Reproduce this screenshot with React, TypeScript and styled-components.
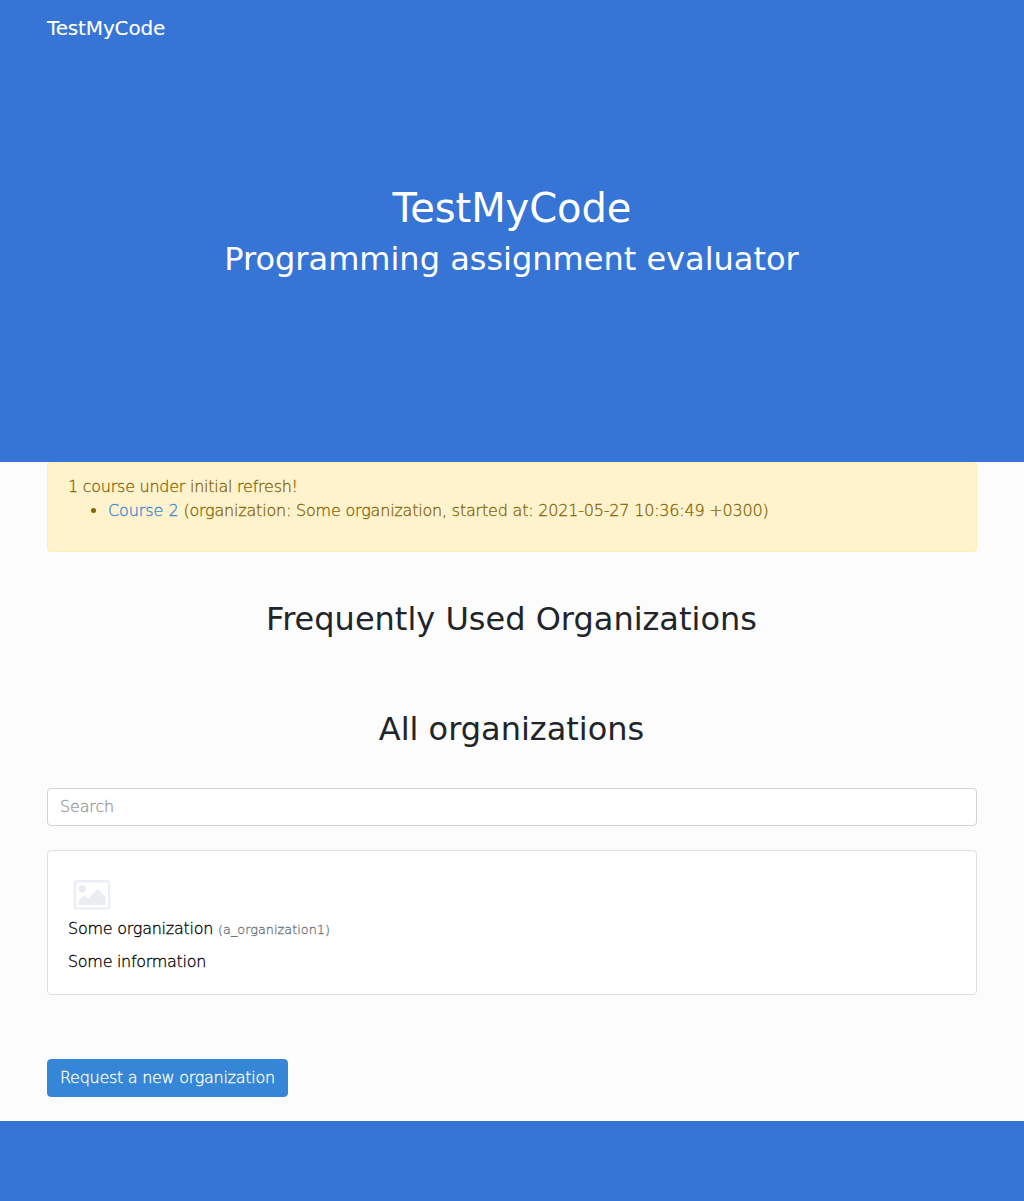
import React from "react";
import styled, { createGlobalStyle } from "styled-components";

const GlobalStyle = createGlobalStyle`
  *, *::before, *::after { box-sizing: border-box; }
  body {
    margin: 0;
    background: #3675d6;
    color: #212529;
    font: 200 16px/1.5 "DejaVu Sans", sans-serif;
    letter-spacing: -0.25px;
    -webkit-text-stroke: 0.3px;
  }
`;
const Container = styled.div`
  width: 930px;
  margin: 0 auto;
`;
const Nav = styled.nav`
  height: 56px;
  padding: 8px 0;
`;
const Brand = styled.a`
  display: inline-block;
  padding: 5px 0;
  color: #fff;
  font-size: 20px;
  line-height: 30px;
  font-weight: 400;
  letter-spacing: -0.15px;
  -webkit-text-stroke: 0.1px;
  text-decoration: none;
`;
const Hero = styled.header`
  height: 406px;
  padding-top: 128px;
  text-align: center;
  color: #fff;
`;
const HeroTitle = styled.h1`
  margin: 0 0 8px;
  font-size: 40px;
  line-height: 48px;
  font-weight: 400;
  letter-spacing: -0.05px;
  -webkit-text-stroke: 0;
`;
const Heading = styled.h2`
  margin: 0;
  padding-right: 1px;
  font-size: 32px;
  line-height: 38px;
  font-weight: 400;
  letter-spacing: 0;
  -webkit-text-stroke: 0;
  text-align: center;
`;
const Main = styled.main`
  height: 659px;
  background: #fcfcfc;
`;
const Alert = styled.div`
  height: 90px;
  margin-bottom: 48px;
  padding: 12px 20px;
  border: 1px solid #ffeeba;
  border-radius: 4px;
  background: #fff3cd;
  color: #856404;
`;
const AlertList = styled.ul`
  margin: 0;
  padding-left: 40px;
  letter-spacing: -0.2px;
`;
const CourseLink = styled.a`
  color: #3586d6;
  letter-spacing: -0.08px;
  text-decoration: none;
`;
const Search = styled.input`
  display: block;
  width: 100%;
  height: 38px;
  margin: 40px 0 24px;
  padding: 5px 12px 7px;
  border: 1px solid #ced4da;
  border-radius: 4px;
  background: #fff;
  font: inherit;
  letter-spacing: -0.15px;
  &::placeholder { color: #999; opacity: 1; }
`;
const Spacer = styled.div`
  height: 72px;
`;
const Card = styled.section`
  height: 145px;
  padding: 20px;
  border: 1px solid #dfdfdf;
  border-radius: 4px;
  background: #fff;
  color: #000;
`;
const Logo = styled.svg`
  display: block;
  width: 48px;
  height: 46px;
`;
const Name = styled.div`
  height: 24px;
  margin-bottom: 9px;
`;
const Slug = styled.small`
  font-size: 12.8px;
  letter-spacing: 0.03px;
  color: #6c757d;
`;
const Info = styled.div`
  letter-spacing: -0.3px;
`;
const Button = styled.button`
  display: block;
  height: 38px;
  margin-top: 64px;
  padding: 6px 12px;
  border: 1px solid #3586d6;
  border-radius: 4px;
  background: #3586d6;
  color: #fff;
  font: inherit;
  letter-spacing: -0.28px;
`;
const Footer = styled.footer`
  height: 80px;
`;

export default function App() {
  return (
    <>
      <GlobalStyle />
      <Nav><Container><Brand>TestMyCode</Brand></Container></Nav>
      <Hero>
        <HeroTitle>TestMyCode</HeroTitle>
        <Heading>Programming assignment evaluator</Heading>
      </Hero>
      <Main>
        <Container>
          <Alert>
            1 course under initial refresh!
            <AlertList>
              <li><CourseLink>Course 2</CourseLink> (organization: Some organization, started at: 2021-05-27 10:36:49 +0300)</li>
            </AlertList>
          </Alert>
          <Heading>Frequently Used Organizations</Heading>
          <Spacer />
          <Heading>All organizations</Heading>
          <Search placeholder="Search" />
          <Card>
            <Logo viewBox="0 0 48 46" fill="none">
              <rect x="7" y="10.2" width="34.2" height="27.4" rx="2" stroke="#ebeef5" strokeWidth="2.4" />
              <circle cx="14.3" cy="17.8" r="3.7" fill="#e9ecf3" />
              <path d="M10.6 34v-4.2l6.2-5.8 3.5 3.5 9.2-9.7 8 8v8.2z" fill="#e9ecf3" />
            </Logo>
            <Name>Some organization <Slug>(a_organization1)</Slug></Name>
            <Info>Some information</Info>
          </Card>
          <Button>Request a new organization</Button>
        </Container>
      </Main>
      <Footer />
    </>
  );
}
